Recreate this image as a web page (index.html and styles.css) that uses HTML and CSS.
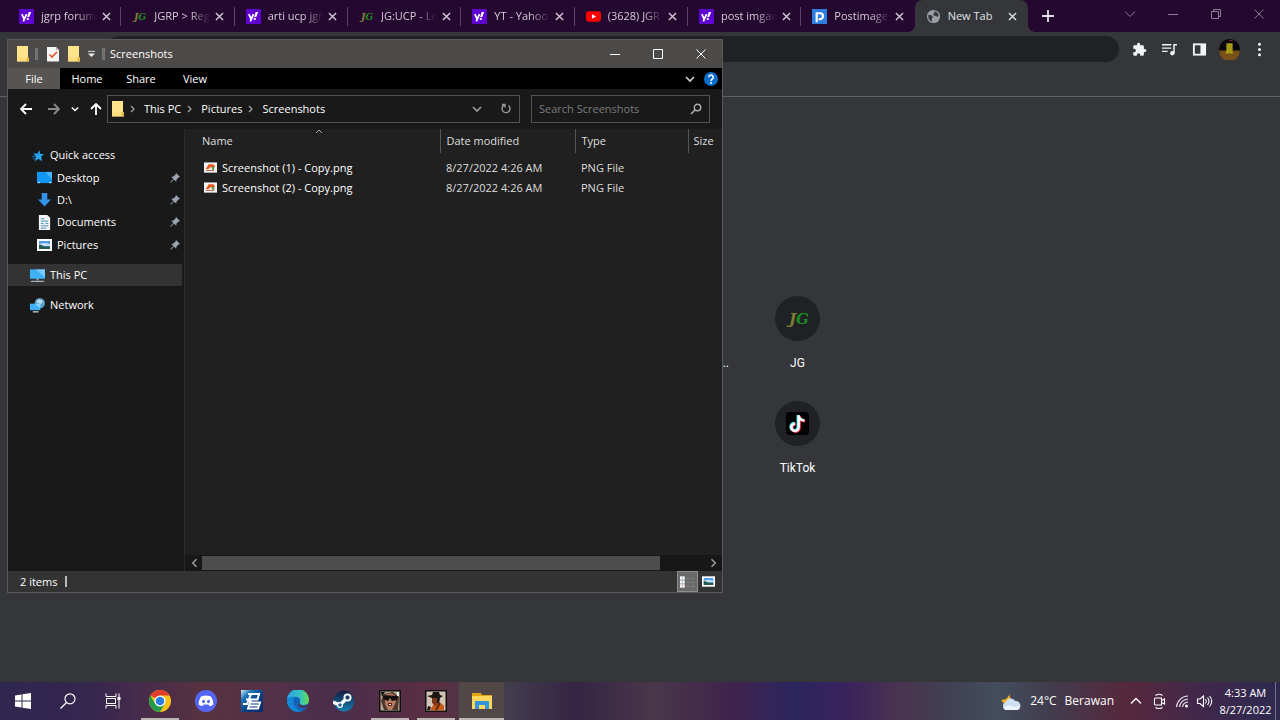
FILE: index.html
```html
<!DOCTYPE html>
<html lang="en">
<head>
<meta charset="utf-8">
<title>Desktop</title>
<link rel="stylesheet" href="styles.css">
</head>
<body>
<svg class="sprites" aria-hidden="true">
  <symbol id="yahoo" viewBox="0 0 16 16"><path fill="#5f01d1" d="M0 0h16v16H0z"/><path d="M3 5.500l2.400 5M8 5.500L4.600 13.200" stroke="#fff" stroke-width="1.900" fill="none"/><path d="M10.300 3.200h2.700l-2 5.200H8.700z" fill="#fff"/><circle cx="9.300" cy="10.600" r="1.200" fill="#fff"/></symbol>
  <symbol id="jg" viewBox="0 0 24 16"><text x="3" y="13" class="jg-text" fill="#7e7f37">J</text><text x="10" y="13" class="jg-text" fill="#1c8c22">G</text></symbol>
  <symbol id="youtube" viewBox="0 0 16 16"><rect x="0" y="2.500" width="16" height="11" rx="3" fill="#f00"/><path d="M6.300 5.500v5l4.500-2.500z" fill="#fff"/></symbol>
  <symbol id="postimage" viewBox="0 0 16 16"><path fill="#2f7de1" d="M0 0h16v16H0z"/><path d="M5 14V4.500h3.500a3.200 3.200 0 0 1 0 6.400H7" fill="none" stroke="#fff" stroke-width="2.300"/></symbol>
  <symbol id="globe" viewBox="0 0 16 16"><circle cx="8" cy="8" r="7" fill="#9aa0a6"/><path d="M2.500 6l4 1 1 2-1.500 1 .5 3.500C3.500 12.500 2 10 2.500 6zM8 2.500L11 3l2.500 3-1 2.500-2-1-2-.5-1-2 2-1z" fill="#35363a"/></symbol>
  <symbol id="x" viewBox="0 0 10 10"><path d="M1 1l8 8M9 1L1 9" stroke="currentColor" stroke-width="1.500"/></symbol>
  <symbol id="chev" viewBox="0 0 10 10"><path d="M1 3l4 4 4-4" fill="none" stroke="currentColor" stroke-width="1.700"/></symbol>
  <symbol id="gt" viewBox="0 0 8 8"><path d="M2 1l3 3-3 3" fill="none" stroke="currentColor" stroke-width="1.300"/></symbol>
  <symbol id="folder" viewBox="0 0 14 16"><path fill="#ffe48c" d="M1 0h11v11h1v4.500H1z"/><path fill="#e2b548" d="M10.500 11H13v4.500h-2.500z"/><path fill="#f8d775" d="M1 11h9.500v4.500H1z" opacity=".6"/></symbol>
  <symbol id="pin" viewBox="0 0 10 10"><path d="M6 0l4 4-1.500.5-2 2-.3 2.200L4 6.600.8 9.800l-.6-.6L3.400 6 1.300 3.800l2.200-.3 2-2z" fill="#9ba6b0"/></symbol>
  <symbol id="png" viewBox="0 0 14 12"><path fill="#f3f3f3" d="M0 0h14v11H0z"/><path fill="#e25a1b" d="M2 7l3-5h5l2 2-2 2-3-1-2 2z"/><path fill="#4d9b44" d="M8 5h3v3H9z"/><path fill="#b5482b" d="M2 8h9v1H2z"/></symbol>
  <symbol id="photo" viewBox="0 0 15 12"><path fill="#fff" d="M0 0h15v12H0z"/><path fill="#4e9bea" d="M2 2h11v8H2z"/><path fill="#c6e0f7" d="M2 5q5-2 11 0v2H2z"/><path fill="#27594f" d="M2 5.500q3 0 5 2h6V10H2z"/></symbol>
</svg>

<div class="desktop">
  <div class="browser">
    <header class="tabstrip">
      <nav class="tabs" aria-label="Tabs">
        <div class="tab"><svg class="fav"><use href="#yahoo"/></svg><button class="label fade">jgrp forum</button><button class="close" aria-label="Close tab"><svg><use href="#x"/></svg></button></div>
        <div class="tab"><svg class="fav"><use href="#jg"/></svg><button class="label fade">JGRP &gt; Reg</button><button class="close" aria-label="Close tab"><svg><use href="#x"/></svg></button></div>
        <div class="tab"><svg class="fav"><use href="#yahoo"/></svg><button class="label fade">arti ucp jgrp</button><button class="close" aria-label="Close tab"><svg><use href="#x"/></svg></button></div>
        <div class="tab"><svg class="fav"><use href="#jg"/></svg><button class="label fade">JG:UCP - Lo</button><button class="close" aria-label="Close tab"><svg><use href="#x"/></svg></button></div>
        <div class="tab"><svg class="fav"><use href="#yahoo"/></svg><button class="label fade">YT - Yahoo</button><button class="close" aria-label="Close tab"><svg><use href="#x"/></svg></button></div>
        <div class="tab"><svg class="fav"><use href="#youtube"/></svg><button class="label fade">(3628) JGR</button><button class="close" aria-label="Close tab"><svg><use href="#x"/></svg></button></div>
        <div class="tab"><svg class="fav"><use href="#yahoo"/></svg><button class="label fade">post imgae</button><button class="close" aria-label="Close tab"><svg><use href="#x"/></svg></button></div>
        <div class="tab last"><svg class="fav"><use href="#postimage"/></svg><button class="label fade">Postimages</button><button class="close" aria-label="Close tab"><svg><use href="#x"/></svg></button></div>
        <div class="tab active"><svg class="fav"><use href="#globe"/></svg><button class="label">New Tab</button><button class="close" aria-label="Close tab"><svg><use href="#x"/></svg></button></div>
      </nav>
      <div class="strip-end">
        <button class="new-tab" aria-label="New tab"><svg viewBox="0 0 12 12"><path d="M6 0v12M0 6h12" stroke="#e6e0ea" stroke-width="1.800"/></svg></button>
        <div class="win-controls">
          <button aria-label="Search tabs"><svg viewBox="0 0 12 12"><path d="M1 3.500l5 5 5-5" fill="none" stroke="currentColor"/></svg></button>
          <button aria-label="Minimize"><svg viewBox="0 0 12 12"><path d="M1 6.500h10" stroke="currentColor"/></svg></button>
          <button aria-label="Restore"><svg viewBox="0 0 12 12"><path d="M1.500 3.500h7v7h-7zM3.500 3.500v-2h7v7h-2" fill="none" stroke="currentColor"/></svg></button>
          <button aria-label="Close"><svg viewBox="0 0 12 12"><path d="M1.500 1.500l9 9M10.500 1.500l-9 9" stroke="currentColor"/></svg></button>
        </div>
      </div>
    </header>
    <div class="toolbar">
      <input class="omnibox" type="text" aria-label="Address">
      <div class="tools">
        <button aria-label="Extensions"><svg viewBox="0 0 24 24"><path fill="#f1f3f4" d="M20.500 11H19V7a2 2 0 0 0-2-2h-4V3.500a2.500 2.500 0 0 0-5 0V5H4a2 2 0 0 0-2 2v3.800h1.500a2.700 2.700 0 0 1 0 5.400H2V20a2 2 0 0 0 2 2h3.800v-1.500a2.700 2.700 0 0 1 5.400 0V22H17a2 2 0 0 0 2-2v-4h1.500a2.500 2.500 0 0 0 0-5z"/></svg></button>
        <button aria-label="Media"><svg viewBox="0 0 16 16"><path d="M0 3h10M0 6.500h10M0 10h6" stroke="#f1f3f4" stroke-width="1.500"/><path d="M12.800 12V3H16" fill="none" stroke="#f1f3f4" stroke-width="1.600"/><circle cx="11" cy="12" r="2.300" fill="#f1f3f4"/></svg></button>
        <button aria-label="Side panel"><svg viewBox="0 0 16 16"><path fill="#f1f3f4" d="M1 1.500h14v13H1z"/><path fill="#35363a" d="M3 3.500h6v9H3z"/></svg></button>
        <button class="avatar" aria-label="Profile"><svg viewBox="0 0 20 20"><circle cx="10" cy="10" r="10" fill="#06060c"/><path fill="#785018" d="M0 11h20a10 10 0 0 1-20 0z"/><path fill="#a59a18" d="M7 4h6v9l1 1h-3l-1-1-1 1H6l1-3z"/><path fill="#8b2a22" d="M10 1h3v1h-3z"/></svg></button>
        <button aria-label="Menu"><svg viewBox="0 0 16 16"><g fill="#f1f3f4"><circle cx="8" cy="2.500" r="1.600"/><circle cx="8" cy="8" r="1.600"/><circle cx="8" cy="13.500" r="1.600"/></g></svg></button>
      </div>
    </div>
    <div class="bookmarks"></div>
    <main class="ntp">
      <div class="shortcuts">
        <a class="shortcut cut" href="#">...</a>
        <a class="shortcut" href="#"><span class="disc"><svg class="jg-big"><use href="#jg"/></svg></span>JG</a>
        <a class="shortcut second" href="#"><span class="disc"><svg class="tiktok" viewBox="0 0 24 24"><rect width="24" height="24" rx="4" fill="#000"/><g fill="none" stroke-width="3"><path d="M12.500 3v12.500a3.800 3.800 0 1 1-3.800-3.800M12.500 4q1 4 6 4.500" stroke="#25f4ee"/><path d="M14 4v12.500a3.800 3.800 0 1 1-3.800-3.800M14 5q1 4 6 4.500" stroke="#fe2c55"/><path d="M13.200 3.500V16a3.800 3.800 0 1 1-3.800-3.800M13.200 4.500q1 4 6 4.500" stroke="#fff" stroke-width="2.600"/></g></svg></span>TikTok</a>
      </div>
    </main>
  </div>

  <section class="explorer" aria-label="Screenshots">
    <header class="titlebar">
      <svg class="folder"><use href="#folder"/></svg><i class="grip"></i>
      <svg class="props" viewBox="0 0 12 16"><path fill="#f4f4f4" d="M0 1h9l3 3v11.500H0z"/><path fill="#b9b9b9" d="M9 1v3h3z"/><path d="M2.500 8.500l2.500 2.500 5-5" fill="none" stroke="#e2572b" stroke-width="1.600"/></svg>
      <svg class="folder"><use href="#folder"/></svg>
      <svg class="custom" viewBox="0 0 8 8"><path d="M0 1h8" stroke="#eee"/><path d="M0 3.500h8L4 7.500z" fill="#eee"/></svg>
      <i class="grip thin"></i>
      <h1>Screenshots</h1>
      <div class="ex-controls">
        <button aria-label="Minimize"><svg viewBox="0 0 12 12"><path d="M1 6.500h10" stroke="#fff"/></svg></button>
        <button aria-label="Maximize"><svg viewBox="0 0 12 12"><path d="M1.500 1.500h9v9h-9z" fill="none" stroke="#fff"/></svg></button>
        <button aria-label="Close"><svg viewBox="0 0 12 12"><path d="M1.500 1.500l9 9M10.500 1.500l-9 9" stroke="#fff"/></svg></button>
      </div>
    </header>
    <nav class="ribbon">
      <button class="file">File</button><button>Home</button><button>Share</button><button>View</button>
      <span class="ribbon-end"><svg class="chev"><use href="#chev"/></svg><svg class="help" viewBox="0 0 14 14"><circle cx="7" cy="7" r="7" fill="#0a6fcb"/><path d="M4.800 5.200a2.200 2.200 0 1 1 3.500 1.800Q7 7.800 7 9" fill="none" stroke="#fff" stroke-width="1.500"/><circle cx="7" cy="11" r="1" fill="#fff"/></svg></span>
    </nav>
    <div class="addressbar">
      <div class="history">
        <button aria-label="Back"><svg viewBox="0 0 12 12"><path d="M12 6H1M6 1L1 6l5 5" fill="none" stroke="#fff" stroke-width="1.800"/></svg></button>
        <button aria-label="Forward"><svg viewBox="0 0 12 12"><path d="M0 6h11M6 1l5 5-5 5" fill="none" stroke="#8a8a8a" stroke-width="1.800"/></svg></button>
        <button class="small" aria-label="Recent"><svg><use href="#chev"/></svg></button>
        <button class="up" aria-label="Up"><svg viewBox="0 0 12 12"><path d="M6 12V1M1 6l5-5 5 5" fill="none" stroke="#fff" stroke-width="1.800"/></svg></button>
      </div>
      <div class="crumbs">
        <svg class="folder"><use href="#folder"/></svg>
        <svg class="gt"><use href="#gt"/></svg><button>This PC</button>
        <svg class="gt"><use href="#gt"/></svg><button>Pictures</button>
        <svg class="gt"><use href="#gt"/></svg><button>Screenshots</button>
        <span class="crumb-end"><svg class="chev"><use href="#chev"/></svg><svg class="reload" viewBox="0 0 12 12"><path d="M8.500 2.500a4 4 0 1 1-4.500-.3M2 1.500h3v3" fill="none" stroke="#9a9a9a" stroke-width="1.400"/></svg></span>
      </div>
      <label class="search"><input type="search" placeholder="Search Screenshots" aria-label="Search Screenshots"><svg viewBox="0 0 12 12"><circle cx="7.500" cy="4.500" r="3.200" fill="none" stroke="#b0b0b0" stroke-width="1.400"/><path d="M5 7L1 11" stroke="#b0b0b0" stroke-width="1.600"/></svg></label>
    </div>
    <div class="body">
      <nav class="pane">
        <div class="group">
          <a href="#" class="root"><svg viewBox="0 0 16 16"><path fill="#2aa5f2" d="M10 2l1 4.500h4L12 9l.8 5L9 11.500 5 14l1.500-5L4 6.500h4z"/><path d="M2 9h4M3 11.500h3M4 6h4" stroke="#1b74c4"/></svg><span>Quick access</span></a>
          <a href="#"><svg viewBox="0 0 16 14"><path fill="#1295f5" d="M0 1h16v12H0z"/><path fill="#45b4ff" d="M9 1h7v8z"/><path d="M1 12.500h2M13 12.500h2" stroke="#dff"/></svg><span>Desktop</span><svg class="pin"><use href="#pin"/></svg></a>
          <a href="#"><svg viewBox="0 0 16 16"><path fill="#3391e6" d="M5 1h6v7h4l-7 7.500L1 8h4z"/></svg><span>D:\</span><svg class="pin"><use href="#pin"/></svg></a>
          <a href="#"><svg viewBox="0 0 16 16"><path fill="#f5f5f5" d="M2 0h9l3 3v13H2z"/><path d="M4 4h4M4 6.500h8M4 9h3M9 9h3M4 11.500h8M4 14h6" stroke="#3a8bb8"/></svg><span>Documents</span><svg class="pin"><use href="#pin"/></svg></a>
          <a href="#"><svg class="photo"><use href="#photo"/></svg><span>Pictures</span><svg class="pin"><use href="#pin"/></svg></a>
        </div>
        <a href="#" class="root selected"><svg viewBox="0 0 16 16"><path fill="#3fb2f7" d="M0 1.500h16v10H0z"/><path fill="#7accff" d="M6 1.500h10v8z"/><path fill="#a9b5bd" d="M7 11.500h2v1.500H7zM2 13.500h12l2 1.500H0z"/></svg><span>This PC</span></a>
        <a href="#" class="root"><svg viewBox="0 0 16 16"><circle cx="10.500" cy="5.500" r="5.500" fill="#5a9fc8"/><path d="M7 2.500q4-2 7 1l-2 3-4-1z" fill="#b4dcec"/><path fill="#3fb2f7" d="M0 6h11v7H0z"/><path fill="#8ad3ff" d="M5 6h6v5z"/><path fill="#bcc8ce" d="M3 14h6v1.500H3z"/></svg><span>Network</span></a>
      </nav>
      <div class="content">
        <table>
          <colgroup><col class="c-name"><col class="c-date"><col class="c-type"><col></colgroup>
          <thead><tr><th>Name<svg class="sort" viewBox="0 0 8 5"><path d="M1 4l3-3 3 3" fill="none" stroke="#aaa"/></svg></th><th>Date modified</th><th>Type</th><th>Size</th></tr></thead>
          <tbody>
            <tr><td><span class="file-cell"><svg><use href="#png"/></svg>Screenshot (1) - Copy.png</span></td><td>8/27/2022 4:26 AM</td><td>PNG File</td><td></td></tr>
            <tr><td><span class="file-cell"><svg><use href="#png"/></svg>Screenshot (2) - Copy.png</span></td><td>8/27/2022 4:26 AM</td><td>PNG File</td><td></td></tr>
          </tbody>
        </table>
        <div class="scrollbar">
          <button aria-label="Scroll left"><svg class="flip"><use href="#gt"/></svg></button>
          <div class="track"><div class="thumb"></div></div>
          <button aria-label="Scroll right"><svg><use href="#gt"/></svg></button>
        </div>
      </div>
    </div>
    <footer class="status">
      <span class="count">2 items</span>
      <button class="view on" aria-label="Details view"><svg viewBox="0 0 16 14"><path fill="#fff" d="M0 1h5v12H0z"/><path d="M0 5h5M0 9h5M7 3.500h3M12 3.500h3M7 7.500h3M12 7.500h3M7 11.500h3M12 11.500h3" stroke="#8b8b8b"/><path d="M2 3h1M2 7h1" stroke="#3873b8"/><path d="M2 11h1" stroke="#c33"/></svg></button>
      <button class="view" aria-label="Thumbnail view"><svg class="photo"><use href="#photo"/></svg></button>
    </footer>
  </section>

  <footer class="taskbar">
    <div class="system">
      <button aria-label="Start"><svg viewBox="0 0 16 16"><path fill="#fff" d="M0 2.500l6.500-1v6H0zM7.500 1.300L16 0v7.500H7.500zM0 8.500h6.500v6L0 13.600zM7.500 8.500H16V16l-8.500-1.200z"/></svg></button>
      <button aria-label="Search"><svg viewBox="0 0 16 16"><circle cx="10" cy="5.800" r="5" fill="none" stroke="#fff" stroke-width="1.200"/><path d="M6.500 9.500L.5 15.500" stroke="#fff" stroke-width="1.200"/></svg></button>
      <button aria-label="Task view"><svg viewBox="0 0 16 16"><path d="M1 .500v3h10v-3M1.500 5.500h9v5h-9zM1 15.500v-3h10v3M14 .500v15" fill="none" stroke="#fff"/><path fill="#fff" d="M12.500 4h3v3h-3z"/></svg></button>
    </div>
    <div class="apps">
      <button class="run" aria-label="Chrome"><svg viewBox="0 0 22 22"><circle cx="11" cy="11" r="11" fill="#fbc116"/><path fill="#e33b2e" d="M11 11L1.500 5.500A11 11 0 0 1 20.500 5.500H11z"/><path fill="#229b4a" d="M1.500 5.500A11 11 0 0 0 11 22l4.800-8.200L11 11 6.200 13.700z"/><circle cx="11" cy="11" r="5.500" fill="#fff"/><circle cx="11" cy="11" r="4.300" fill="#2a7de9"/></svg></button>
      <button aria-label="Discord"><svg viewBox="0 0 22 22"><circle cx="11" cy="11" r="11" fill="#5766f2"/><path fill="#fff" d="M8 6q3-1 6 0l2 .5q2.500 4 2.300 8-1.800 1.500-4 1.500l-.8-1.400h-5L7.700 16q-2.200 0-4-1.500Q3.500 10.500 6 6.500z"/><ellipse cx="8.500" cy="11.500" rx="1.500" ry="1.700" fill="#5766f2"/><ellipse cx="13.500" cy="11.500" rx="1.500" ry="1.700" fill="#5766f2"/></svg></button>
      <button aria-label="Point Blank"><svg viewBox="0 0 22 22"><defs><linearGradient id="pb" x2="1" y2="1"><stop stop-color="#d5eefb"/><stop offset=".25" stop-color="#1b74b9"/><stop offset=".6" stop-color="#06397f"/><stop offset="1" stop-color="#052a68"/></linearGradient></defs><path fill="url(#pb)" d="M0 0h22v22H0z"/><path d="M7 4h11l-1.500 5.500H5M10 4L6 14H2M8 12.500h11l-2 6H7l3-9M9 15.500h8" fill="none" stroke="#fff" stroke-width="2"/></svg></button>
      <button aria-label="Edge"><svg viewBox="0 0 22 22"><defs><linearGradient id="eg" x2="1"><stop stop-color="#2b9ee8"/><stop offset=".6" stop-color="#35c5c0"/><stop offset="1" stop-color="#66d84e"/></linearGradient></defs><circle cx="11" cy="11" r="11" fill="#1563b8"/><path fill="url(#eg)" d="M0 10A11 11 0 0 1 22 10q0 5-6 5-4 0-3-3 1-4-3-5-6-1-10 3z"/><path fill="#1387d8" d="M0 11q4-5 8-4-3 3-1 8 3 6 8 6A11 11 0 0 1 0 11z"/><path fill="#512c49" d="M12.500 12q-1 3.500 4 4 3 0 5-2l-1 3q-6 2-9-1-1-2 1-4z"/></svg></button>
      <button aria-label="Steam"><svg viewBox="0 0 22 22"><defs><linearGradient id="st" y2="1" x2="0"><stop stop-color="#111d3f"/><stop offset="1" stop-color="#187eaf"/></linearGradient></defs><circle cx="11" cy="11" r="10.500" fill="url(#st)"/><path d="M0 12l7 3 7-7" stroke="#fff" stroke-width="3.500" fill="none"/><circle cx="14.500" cy="7.500" r="4" fill="#fff"/><circle cx="14.500" cy="7.500" r="2.300" fill="#20385d" stroke="#b9c5d1"/><circle cx="7" cy="15" r="3" fill="#fff"/><circle cx="7" cy="15" r="1.800" fill="#29628d"/></svg></button>
      <button class="run" aria-label="GTA San Andreas"><svg viewBox="0 0 22 22"><path fill="#111" d="M0 0h22v22H0z"/><path fill="#b7a996" d="M1.500 1.500h19v19h-19z"/><path fill="#51372b" d="M2 11l3-7 9-2 6 5-1 13H5z"/><path fill="#b47c62" d="M6 5q5-3 10 0l1 7-4 8H9L6 14z"/><path fill="#15100f" d="M4 5l15 1-1 4-5 1-2-3-2 3-5-2zM2 2h4L3 7z"/><path fill="#6c221d" d="M9 13h4v3H9z"/><path fill="#eee" d="M10 14h2v1h-2zM18 2h2v4h-2z"/></svg></button>
      <button class="run" aria-label="SA-MP"><svg viewBox="0 0 22 22"><path fill="#111" d="M0 0h22v22H0z"/><path fill="#d4c4b5" d="M1.500 1.500h19v19h-19z"/><path fill="#c45a19" d="M5 20.500l4-7 4-2 6 4v5z"/><path fill="#7b3517" d="M7 7h6l1 5-3 4-4-3z"/><path fill="#1c1612" d="M2 6l5-1 1-3h6l1 3 3 1-3 2H7zM12 8h3l-1 6-2-2zM3 16l3 1-1 3-3 0z"/><path d="M11 20l4-7" stroke="#5e2513" stroke-width="2"/></svg></button>
      <button class="run current" aria-label="File Explorer"><svg viewBox="0 0 22 22"><path fill="#e6a317" d="M1 3h9l1 2h10v4H1z"/><path fill="#ffd75e" d="M1 6h20v13H1z"/><path fill="#3295df" d="M4 19v-8h14v8h-4v-4H8v4z"/></svg></button>
    </div>
    <div class="tray">
      <button class="weather"><svg viewBox="0 0 22 20"><path fill="#fbb51e" d="M10 0q-3 6 3 9l-3 4-8-2Q0 10 1 8q6 1 9-8z"/><path fill="#cfdff4" d="M5 19a4.500 4.500 0 0 1 0-8.500 5.500 5.500 0 0 1 10-1 5 5 0 0 1 2.500 9.500z"/><path fill="#eef5fd" d="M3 16q5-3 9-1t8-1q-1 5-4 5H6q-3 0-3-3z"/></svg><span>24°C</span><span>Berawan</span></button>
      <button class="t-chev" aria-label="Hidden icons"><svg viewBox="0 0 16 16"><path d="M3 10.500l5-5 5 5" fill="none" stroke="#fff" stroke-width="1.300"/></svg></button>
      <button aria-label="Meet now"><svg viewBox="0 0 16 16"><path d="M4.500 5h6v7h-6a1 1 0 0 1-1-1V6a1 1 0 0 1 1-1zM10.500 7.500l3-1.500v5l-3-1.500M4.500 2.500q3.500-2.500 7 0M4.500 14.500q3.500 2 7 0" fill="none" stroke="#fff" stroke-width="1.100"/></svg></button>
      <button aria-label="Network"><svg viewBox="0 0 16 16"><path d="M2.500 14A12 12 0 0 1 14 3M5.500 14A9 9 0 0 1 14 6M8.500 14A6 6 0 0 1 14 9" fill="none" stroke="#e5dfea" stroke-width="1.200"/><circle cx="12.500" cy="13" r="1.500" fill="#fff"/></svg></button>
      <button aria-label="Volume"><svg viewBox="0 0 16 16"><path d="M.500 6h2.500l3.500-3v10.500L3 10.500H.500zM8.500 6q1.500 2 0 4.500M10.500 4.500q3 3.500 0 7.500M12.500 3q4.500 5 0 10.500" fill="none" stroke="#fff" stroke-width="1.100"/></svg></button>
      <button class="clock"><time>4:33 AM</time><time>8/27/2022</time></button>
    </div>
  </footer>
</div>
</body>
</html>
```
FILE: styles.css
```css
* { box-sizing: border-box; }

body {
  margin: 0;
  font: 11px/16px "Open Sans", "Noto Sans", sans-serif;
  color: #fff;
  background: #35363a;
}

button, input {
  font: inherit;
  color: inherit;
  background: none;
  border: 0;
  padding: 0;
  margin: 0;
}

a { color: inherit; text-decoration: none; }
svg { display: block; flex: none; }
.sprites { position: absolute; width: 0; height: 0; }
.jg-text { font: italic bold 15px "DejaVu Serif", serif; }

.desktop {
  position: relative;
  display: flex;
  flex-direction: column;
  height: 100vh;
  overflow: hidden;
}

/* Browser */
.browser { flex: 1; display: flex; flex-direction: column; min-height: 0; }
.tabstrip { display: flex; height: 32px; padding-left: 8px; background: #25082f; }
.tabs { flex: 1; display: flex; min-width: 0; }

.tab {
  position: relative;
  flex: 1;
  min-width: 0;
  display: flex;
  align-items: center;
  padding: 0 7px 0 11px;
  color: #d5cbd9;
}
.tab::after {
  content: "";
  position: absolute;
  right: 0;
  top: 7px;
  height: 19px;
  width: 1px;
  background: #5c4564;
}
.tab.last::after { display: none; }
.tab.active { background: #35363a; border-radius: 8px 8px 0 0; color: #dfe1e5; }
.tab.active::before, .tab.active::after {
  content: "";
  position: absolute;
  top: auto;
  bottom: 0;
  width: 8px;
  height: 8px;
}
.tab.active::before { left: -8px; background: radial-gradient(circle at 0 0, #25082f 8px, #35363a 8px); }
.tab.active::after { right: -8px; background: radial-gradient(circle at 100% 0, #25082f 8px, #35363a 8px); }
.fav { width: 15px; height: 15px; }
.label { flex: 1; min-width: 0; margin-left: 7px; overflow: hidden; white-space: nowrap; text-align: left; }
.fade { mask-image: linear-gradient(90deg, #000 65%, transparent); }
.close { width: 16px; height: 16px; display: grid; place-items: center; margin-left: 2px; }
.close svg { width: 9px; height: 9px; }

.strip-end { display: flex; width: 252px; justify-content: space-between; }
.new-tab { width: 40px; display: grid; place-items: center; }
.new-tab svg { width: 12px; height: 12px; }
.win-controls { display: flex; height: 27px; color: #8c7b92; }
.win-controls button { width: 43px; display: grid; place-items: center; }
.win-controls svg { width: 12px; height: 12px; }

.toolbar { display: flex; align-items: center; height: 34px; padding: 0 8px 0 106px; }
.omnibox { flex: 1; height: 26px; border-radius: 13px; background: #202124; padding: 0 16px; }
.tools { display: flex; margin-left: 5px; }
.tools button { width: 30px; height: 26px; display: grid; place-items: center; }
.tools svg { width: 15px; height: 15px; }
.tools .avatar svg { width: 21px; height: 21px; }
.tools button:last-child { margin-right: -2px; }
.bookmarks { height: 31px; border-bottom: 1px solid #616265; }

.ntp { flex: 1; padding-top: 199px; font: 12px/16px Roboto, "Noto Sans", sans-serif; }
.shortcuts { display: grid; grid-template-columns: repeat(4, 105px); grid-auto-rows: 105px; justify-content: center; }
.shortcut { grid-column: 4; display: flex; flex-direction: column; align-items: center; gap: 14px; color: #fff; }
.cut { grid-column: 3; grid-row: 1; align-items: flex-end; padding: 59px 16px 0 0; }
.disc { width: 45px; height: 45px; border-radius: 50%; background: #202124; display: grid; place-items: center; }
.jg-big { width: 24px; height: 16px; }
.tiktok { width: 23px; height: 23px; }

/* File explorer */
.explorer {
  position: absolute;
  inset: 39px 557px 127px 7px;
  display: flex;
  flex-direction: column;
  border: 1px solid #5b5a59;
  background: #191919;
}
.titlebar { display: flex; align-items: center; height: 28px; padding: 0 0 1px 8px; background: #4c4a48; }
.titlebar h1 { margin: 0; font: inherit; }
.folder { width: 14px; height: 16px; }
.grip { width: 3px; height: 12px; margin: 0 9px 0 5px; background: #6c6a68; border: 1px solid #777; }
.props { width: 12px; height: 16px; margin-right: 8px; }
.custom { width: 7px; height: 8px; margin-left: 7px; }
.grip.thin { margin: 0 5px 0 7px; }
.ex-controls { display: flex; margin-left: auto; }
.ex-controls button { width: 43px; height: 26px; display: grid; place-items: center; }
.ex-controls svg { width: 12px; height: 12px; }

.ribbon { display: flex; height: 21px; background: #000; }
.ribbon button { width: 54px; }
.ribbon .file { width: 52px; background: #575553; }
.ribbon-end { display: flex; align-items: center; gap: 9px; margin-left: auto; padding-right: 4px; color: #d0d0d0; }
.chev { width: 10px; height: 10px; }
.help { width: 14px; height: 14px; }

.addressbar { display: flex; align-items: center; height: 40px; padding: 0 12px 0 12px; }
.history { display: flex; align-items: center; width: 87px; gap: 16px; }
.history svg { width: 12px; height: 12px; }
.history .small { margin: 0 -5px; }
.history .small svg { width: 8px; height: 8px; }
.crumbs { display: flex; align-items: center; flex: 1; height: 28px; padding: 0 7px 0 3px; border: 1px solid #535353; }
.crumbs .folder { margin-right: 4px; }
.gt { width: 8px; height: 8px; margin: 0 7px 0 5px; color: #a0a0a0; }
.crumbs .folder + .gt { margin-left: 0; }
.crumb-end { display: flex; align-items: center; gap: 18px; margin-left: auto; color: #9a9a9a; }
.reload { width: 12px; height: 12px; }
.search { display: flex; align-items: center; width: 179px; height: 28px; margin-left: 11px; padding: 0 7px; border: 1px solid #535353; }
.search input { flex: 1; min-width: 0; outline: 0; }
.search input::placeholder { color: #7b7b7b; opacity: 1; }
.search svg { width: 12px; height: 12px; }

.body { flex: 1; display: flex; min-height: 0; }
.pane { width: 177px; padding: 15px 2px 0 0; border-right: 1px solid #2b2b2b; }
.group { display: grid; grid-auto-rows: 1fr; height: 112px; }
.pane a { display: flex; align-items: center; gap: 5px; padding: 0 2px 0 29px; height: 22px; }
.pane a.root { padding-left: 22px; }
.pane .group a { height: auto; }
.pane > a { margin-top: 8px; }
.pane a.selected { background: #333; }
.pane svg { width: 15px; height: 15px; }
.pane .photo { height: 12px; }
.pane .pin { width: 10px; height: 10px; margin-left: auto; }

.content { flex: 1; min-width: 0; display: flex; flex-direction: column; justify-content: space-between; background: #202020; }
table { width: 100%; table-layout: fixed; border-collapse: collapse; white-space: nowrap; }
.c-name { width: 255px; }
.c-date { width: 135px; }
.c-type { width: 113px; }
th, td { padding: 0 0 0 6px; text-align: left; font-weight: 400; }
th { position: relative; height: 24px; color: #dedede; border-right: 1px solid #555; }
th:last-child { border: 0; padding-left: 5px; }
thead::after { content: ""; display: block; height: 5px; }
th:first-child { padding-left: 17px; }
td { height: 20px; color: #dedede; }
td:first-child { padding-left: 19px; color: #fff; }
.sort { position: absolute; top: 0; left: 51%; width: 8px; height: 5px; }
.file-cell { display: flex; align-items: center; gap: 5px; }
.file-cell svg { width: 13px; height: 12px; }

.scrollbar { display: flex; height: 16px; background: #171717; color: #9a9a9a; }
.scrollbar button { width: 17px; display: grid; place-items: center; }
.scrollbar svg { width: 10px; height: 10px; }
.flip { transform: scaleX(-1); }
.track { flex: 1; padding: 1px 0; }
.thumb { width: 91%; height: 100%; background: #4d4d4d; }

.status { display: flex; align-items: center; height: 21px; padding: 0 3px 0 12px; background: #333; }
.count { margin-right: auto; padding-right: 8px; line-height: 11px; border-right: 2px solid #bbb; }
.view { width: 21px; height: 21px; display: grid; place-items: center; }
.view.on { background: #696969; border: 1px solid #8d8d8d; }
.view svg { width: 15px; height: 14px; }
.view .photo { width: 13px; height: 11px; }

/* Taskbar */
.taskbar {
  display: flex;
  height: 38px;
  background: linear-gradient(90deg, #2f2750 0%, #35264e 7%, #472b4c 11%, #57323f 16%, #533147 21%, #4b2d4c 26%, #5a2e41 34%, #44404e 39%, #352444 45%, #49374a 51%, #40234c 57%, #2c265f 62%, #38225c 66%, #4a3350 70%, #404054 74%, #434d5c 78%, #413c4d 82%, #56283c 88%, #40284c 94%, #2d2950 100%);
}
.taskbar button { display: grid; place-items: center; }
.system { display: flex; margin-right: 2px; }
.system button { width: 45px; }
.system svg { width: 16px; height: 16px; }
.apps { display: flex; }
.apps button { width: 46px; border-bottom: 2px solid transparent; padding-top: 1px; }
.apps svg { width: 22px; height: 22px; }
.apps .run { width: 38px; margin: 0 4px; border-color: #bcb5b5; }
.apps .current { width: 45px; margin: 0; background: #514747; }
.tray { display: flex; align-items: center; margin-left: auto; border-right: 1px solid #77728c; margin-right: 4px; }
.tray svg { width: 16px; height: 16px; }
.tray button { width: 23px; }
.taskbar .weather { display: flex; align-items: center; gap: 8px; width: auto; margin-right: 10px; font-size: 12px; }
.weather svg { width: 21px; height: 19px; }
.taskbar .clock { display: grid; width: 59px; justify-items: center; line-height: 17px; }
```
